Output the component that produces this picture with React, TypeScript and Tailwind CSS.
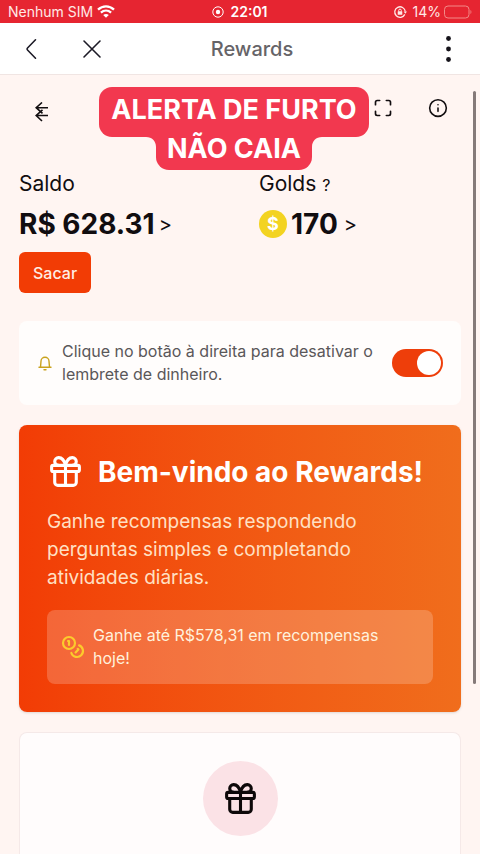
import { useState } from "react";
import { Coins, Gift, Info, Maximize } from "lucide-react";

function StatusBar() {
  return (
    <div className="flex h-[23px] shrink-0 items-center bg-[#e62531] px-2 text-sm leading-none text-[#ffe9e6]">
      <div className="flex flex-1 items-center gap-1">
        <span>Nenhum SIM</span>
        <svg viewBox="0 0 18 13" className="h-[13px] w-[18px]" fill="none" stroke="white" strokeWidth="2.3">
          <path d="M1 4.6C5.6.2 12.4.2 17 4.6" />
          <path d="M3.9 7.7c3-2.7 7.2-2.7 10.2 0" />
          <path d="M9 12.8 6.2 10c1.6-1.4 4-1.4 5.6 0z" fill="white" stroke="none" />
        </svg>
      </div>
      <div className="flex items-center gap-1.5 font-semibold text-white">
        <svg viewBox="0 0 12 12" className="size-3" fill="none" stroke="white">
          <circle cx="6" cy="6" r="5.2" />
          <circle cx="6" cy="6" r="2.2" fill="white" stroke="none" />
        </svg>
        <span>22:01</span>
      </div>
      <div className="flex flex-1 items-center justify-end">
        <svg viewBox="0 0 14 14" className="mr-1.5 size-[14px]" fill="none" stroke="#ffe9e6" strokeWidth="1.3">
          <path d="M11.8 9.4A5.3 5.3 0 1 1 12.3 6.5" />
          <path d="M10.6 6.4h3.4L12.3 8.8z" fill="#ffe9e6" stroke="none" />
          <rect x="4.7" y="6.3" width="4.6" height="3.5" rx="0.5" fill="#ffe9e6" stroke="none" />
          <path d="M5.7 6.5V5.4a1.3 1.3 0 0 1 2.6 0v1.1" strokeWidth="1" />
        </svg>
        <span>14%</span>
        <svg viewBox="0 0 28 14" className="ml-[3px] h-[14px] w-7" fill="none" stroke="#f38a88">
          <rect x="0.5" y="1" width="24.5" height="12" rx="3.5" />
          <path d="M26.5 5v4c1.2-.5 1.2-3.5 0-4z" fill="#f38a88" stroke="none" />
        </svg>
      </div>
    </div>
  );
}

function BrowserHeader() {
  return (
    <header className="flex h-[52px] shrink-0 items-center border-b border-[#f0e5e3] bg-white">
      <div className="flex w-[104px] items-center justify-between pl-5">
        <button type="button" aria-label="Voltar" className="flex size-6 items-center justify-center">
          <svg viewBox="0 0 24 24" className="size-6" fill="none" stroke="#1c1a26" strokeWidth="1.6" strokeLinecap="round" strokeLinejoin="round">
            <path d="M15.5 2.8 7.5 11q-1 1 0 2l8 8.2" />
          </svg>
        </button>
        <button type="button" aria-label="Fechar" className="flex size-6 items-center justify-center">
          <svg viewBox="0 0 24 24" className="size-6" fill="none" stroke="#1c1a26" strokeWidth="1.6" strokeLinecap="round">
            <path d="m4 4 16 16M20 4 4 20" />
          </svg>
        </button>
      </div>
      <h1 className="flex-1 text-center text-xl font-medium text-[#666468]">Rewards</h1>
      <div className="flex w-20 justify-end pr-5">
        <button type="button" aria-label="Mais opções">
          <svg viewBox="0 0 24 28" className="h-7 w-6" fill="#15131a">
            <circle cx="12.5" cy="3.5" r="2.4" />
            <circle cx="12.5" cy="14" r="2.4" />
            <circle cx="12.5" cy="24.5" r="2.4" />
          </svg>
        </button>
      </div>
    </header>
  );
}

function Toolbar() {
  return (
    <div className="flex items-start px-8 pt-[23px]">
      <button type="button" aria-label="Voltar" className="mt-1">
        <svg viewBox="0 0 20 20" className="size-5" fill="none" stroke="#120e10" strokeWidth="1.6">
          <path d="M16 5.7H4.5M10 .5 4.200 5.700l6.300 5.600" />
          <path d="M16 13.500H4.500M10 19 4.200 13.500l6.300-5.600" />
        </svg>
      </button>
      <div className="ml-auto flex gap-[35px]">
        <button type="button" aria-label="Tela cheia">
          <Maximize size={20} strokeWidth={2} color="#120e10" />
        </button>
        <button type="button" aria-label="Informações">
          <Info size={20} strokeWidth={1.9} color="#120e10" />
        </button>
      </div>
    </div>
  );
}

/* Caption sticker laid over the screen */
function AlertSticker() {
  return (
    <div className="absolute inset-x-0 top-[87px] flex flex-col items-center pr-3 text-[27px] font-bold text-white">
      <div className="flex h-[50px] items-center rounded-[13px] bg-[#f2384f] px-3 pb-1">ALERTA DE FURTO</div>
      <div className="flex items-start">
        <svg viewBox="0 0 10 10" className="size-2.5" fill="#f2384f">
          <path d="M0 0h10v10C10 4 6 0 0 0z" />
        </svg>
        <div className="flex h-[33px] items-center rounded-b-[13px] bg-[#f2384f] px-[11px] pb-2">NÃO CAIA</div>
        <svg viewBox="0 0 10 10" className="size-2.5" fill="#f2384f">
          <path d="M10 0H0v10C0 4 4 0 10 0z" />
        </svg>
      </div>
    </div>
  );
}

function Balance() {
  return (
    <section className="grid grid-cols-2 pt-12 text-[#110d10]">
      <div className="pl-[19px]">
        <h2 className="text-[21px] leading-7">Saldo</h2>
        <a href="#saldo" className="mt-2 flex items-center gap-1 leading-9">
          <span className="text-[28px] font-bold">R$ 628.31</span>
          <span className="text-xl">&gt;</span>
        </a>
        <button type="button" className="mt-2.5 h-[41px] rounded-md bg-[#f23c05] px-3.5 text-base font-medium text-[#ffeee4]">
          Sacar
        </button>
      </div>
      <div className="pl-[19px]">
        <h2 className="text-[21px] leading-7">
          Golds <span className="text-base">?</span>
        </h2>
        <a href="#golds" className="mt-2 flex items-center leading-9">
          <span className="mr-1 flex size-7 items-center justify-center rounded-full bg-[#f3d321] text-lg leading-none font-bold text-white">
            $
          </span>
          <span className="text-[28px] font-bold">170</span>
          <span className="ml-1.5 text-xl">&gt;</span>
        </a>
      </div>
    </section>
  );
}

function ReminderCard() {
  const [enabled, setEnabled] = useState(true);

  return (
    <section className="flex items-center rounded-lg bg-[#fffdfc] px-[18px] py-[19px]">
      <svg viewBox="0 0 16 16" className="mr-[9px] size-4 shrink-0" fill="none" stroke="#c9a21c" strokeWidth="1.4" strokeLinecap="round" strokeLinejoin="round">
        <path d="M2 12.3h12M3.500 12.200 4 6.200a4 4 0 0 1 8 0l.5 6M7 14.700h2" />
      </svg>
      <label htmlFor="reminder" className="flex-1 text-base leading-[23px] text-[#5a5759]">
        Clique no botão à direita para desativar o lembrete de dinheiro.
      </label>
      <input
        id="reminder"
        type="checkbox"
        role="switch"
        checked={enabled}
        onChange={(e) => setEnabled(e.target.checked)}
        className="ml-2 flex h-7 w-[51px] shrink-0 appearance-none items-center rounded-full bg-gray-300 px-0.5 before:size-6 before:rounded-full before:bg-white checked:justify-end checked:bg-[#ee3e0a]"
      />
    </section>
  );
}

function WelcomeCard() {
  return (
    <section className="rounded-lg bg-linear-to-r from-[#f23c05] to-[#f06d1c] p-7 shadow-sm">
      <div className="flex items-center gap-3.5">
        <Gift size={37} color="white" className="shrink-0" />
        <h2 className="text-[28px] leading-9 font-bold text-white">Bem-vindo ao Rewards!</h2>
      </div>
      <p className="mt-[18px] text-[19px] leading-7 text-[#ffe0c4]">
        Ganhe recompensas respondendo perguntas simples e completando atividades diárias.
      </p>
      <div className="mt-[18px] flex items-center gap-2 rounded-lg bg-white/20 px-3.5 py-[14px]">
        <Coins size={24} strokeWidth={2.2} color="#fccb2c" className="shrink-0" />
        <p className="text-base leading-[23px] text-[#fff1dc]">Ganhe até R$578,31 em recompensas hoje!</p>
      </div>
    </section>
  );
}

export default function App() {
  return (
    <div className="relative flex h-screen flex-col overflow-hidden bg-[#fff5f2] font-['Inter','Liberation_Sans',sans-serif]">
      <StatusBar />
      <BrowserHeader />
      <main className="flex flex-1 flex-col">
        <Toolbar />
        <Balance />
        <div className="flex flex-1 flex-col gap-5 px-[19px] pt-7">
          <ReminderCard />
          <WelcomeCard />
          <section className="flex flex-1 flex-col items-center rounded-t-lg border border-b-0 border-[#f5e9e8] bg-[#fffcfc] pt-7">
            <div className="flex size-[75px] shrink-0 items-center justify-center rounded-full bg-[#fbe2e6]">
              <Gift size={37} color="#0d0809" />
            </div>
          </section>
        </div>
      </main>
      <AlertSticker />
      {/* Scroll indicator */}
      <div className="absolute top-[91px] right-1 bottom-[170px] w-[3px] rounded-full bg-[#857a79]" />
    </div>
  );
}
